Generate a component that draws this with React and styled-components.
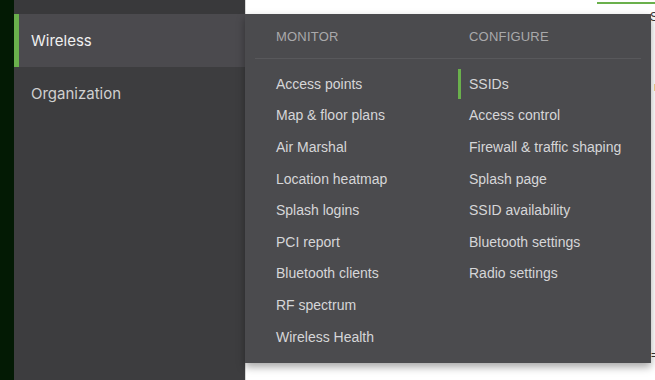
import React from "react";
import styled, { createGlobalStyle } from "styled-components";

const GlobalStyle = createGlobalStyle`
  html, body {
    margin: 0;
    padding: 0;
    background: #ffffff;
    font-family: "Liberation Sans", Arial, sans-serif;
  }
`;

const Page = styled.div`
  position: relative;
  display: flex;
  width: 655px;
  height: 380px;
  overflow: hidden;
`;

const Strip = styled.div`
  width: 14px;
  background: #031a04;
`;

const Sidebar = styled.nav`
  width: 231px;
  display: flex;
  flex-direction: column;
  background: #3d3d3f;
`;

const SidebarTop = styled.div`
  height: 14px;
  background: #39393b;
`;

const NavItem = styled.div`
  height: 53px;
  display: flex;
  align-items: center;
  padding-left: 12px;
  font-family: Inter, "Liberation Sans", sans-serif;
  font-size: 15px;
  color: ${(p) => (p.active ? "#f0f0f0" : "#d0d0d0")};
  background: ${(p) => (p.active ? "#4b4a4e" : "transparent")};
  border-left: 5px solid ${(p) => (p.active ? "#6ab04c" : "transparent")};
  width: ${(p) => (p.active ? "260px" : "auto")};
`;

const Main = styled.div`
  flex: 1;
  position: relative;
  background: #ffffff;
  border-left: 1px solid #d8d8d8;
`;

const TopLine = styled.div`
  position: absolute;
  top: 2px;
  right: 0;
  width: 58px;
  height: 2px;
  background: #6ab04c;
`;

const Fragment = styled.span`
  position: absolute;
  right: -3px;
  top: ${(p) => p.top}px;
  font-size: 12px;
  color: #333;
`;

const Menu = styled.div`
  position: absolute;
  left: 245px;
  top: 14px;
  width: 406px;
  height: 349px;
  background: #4b4b4e;
  box-shadow: 0 4px 8px rgba(0, 0, 0, 0.35);
  display: flex;
  flex-direction: column;
`;

const HeaderRow = styled.div`
  display: grid;
  grid-template-columns: 193px 1fr;
  height: 44px;
  align-items: center;
  margin: 0 10px;
  padding-left: 21px;
  border-bottom: 1px solid #58585b;
`;

const Heading = styled.div`
  font-size: 13px;
  letter-spacing: 0.2px;
  color: #a9a9ab;
`;

const Columns = styled.div`
  display: grid;
  grid-template-columns: 193px 1fr;
  padding: 9px 0 0 31px;
`;

const List = styled.div`
  display: flex;
  flex-direction: column;
`;

const Item = styled.div`
  position: relative;
  height: 31.6px;
  display: flex;
  align-items: center;
  font-size: 14px;
  color: #d6d6d8;

  &::before {
    content: "";
    display: ${(p) => (p.active ? "block" : "none")};
    position: absolute;
    left: -11px;
    top: 1px;
    width: 3px;
    height: 30px;
    background: #6ab04c;
  }
`;

const monitor = [
  "Access points",
  "Map & floor plans",
  "Air Marshal",
  "Location heatmap",
  "Splash logins",
  "PCI report",
  "Bluetooth clients",
  "RF spectrum",
  "Wireless Health",
];

const configure = [
  "SSIDs",
  "Access control",
  "Firewall & traffic shaping",
  "Splash page",
  "SSID availability",
  "Bluetooth settings",
  "Radio settings",
];

export default function App() {
  return (
    <Page>
      <GlobalStyle />
      <Strip />
      <Sidebar>
        <SidebarTop />
        <NavItem active>Wireless</NavItem>
        <NavItem>Organization</NavItem>
      </Sidebar>
      <Main>
        <TopLine />
        <Fragment top={10}>S</Fragment>
        <Fragment top={80}>r</Fragment>
        <Fragment top={348}>=</Fragment>
      </Main>
      <Menu>
        <HeaderRow>
          <Heading>MONITOR</Heading>
          <Heading>CONFIGURE</Heading>
        </HeaderRow>
        <Columns>
          <List>
            {monitor.map((m) => (
              <Item key={m}>{m}</Item>
            ))}
          </List>
          <List>
            {configure.map((c, i) => (
              <Item key={c} active={i === 0}>
                {c}
              </Item>
            ))}
          </List>
        </Columns>
      </Menu>
    </Page>
  );
}
